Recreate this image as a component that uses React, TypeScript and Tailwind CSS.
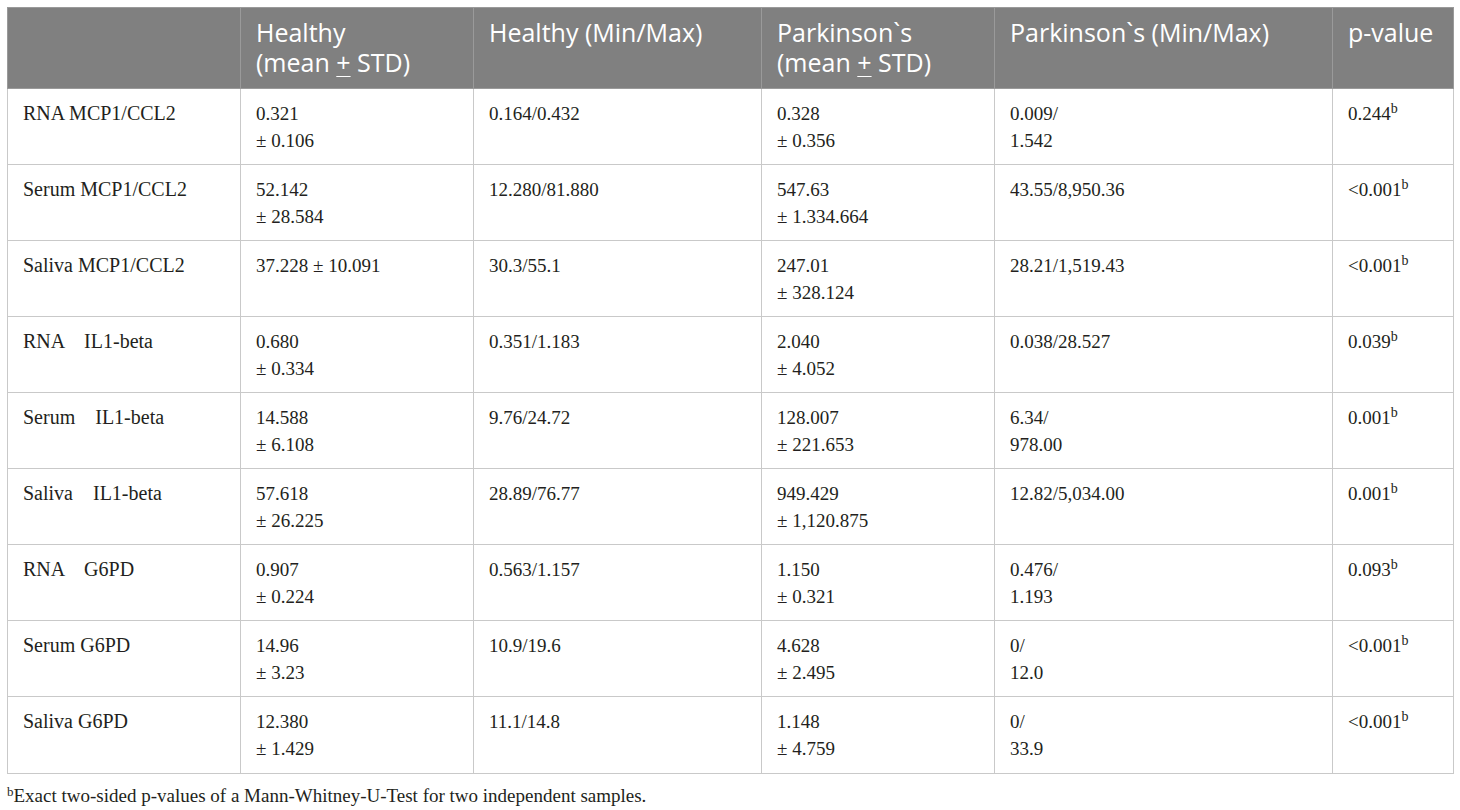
import React from "react";

const rows: [string, string[], string, string[], string[], string][] = [
  ["RNA MCP1/CCL2", ["0.321", "± 0.106"], "0.164/0.432", ["0.328", "± 0.356"], ["0.009/", "1.542"], "0.244"],
  ["Serum MCP1/CCL2", ["52.142", "± 28.584"], "12.280/81.880", ["547.63", "± 1.334.664"], ["43.55/8,950.36"], "<0.001"],
  ["Saliva MCP1/CCL2", ["37.228 ± 10.091"], "30.3/55.1", ["247.01", "± 328.124"], ["28.21/1,519.43"], "<0.001"],
  ["RNA    IL1-beta", ["0.680", "± 0.334"], "0.351/1.183", ["2.040", "± 4.052"], ["0.038/28.527"], "0.039"],
  ["Serum    IL1-beta", ["14.588", "± 6.108"], "9.76/24.72", ["128.007", "± 221.653"], ["6.34/", "978.00"], "0.001"],
  ["Saliva    IL1-beta", ["57.618", "± 26.225"], "28.89/76.77", ["949.429", "± 1,120.875"], ["12.82/5,034.00"], "0.001"],
  ["RNA    G6PD", ["0.907", "± 0.224"], "0.563/1.157", ["1.150", "± 0.321"], ["0.476/", "1.193"], "0.093"],
  ["Serum G6PD", ["14.96", "± 3.23"], "10.9/19.6", ["4.628", "± 2.495"], ["0/", "12.0"], "<0.001"],
  ["Saliva G6PD", ["12.380", "± 1.429"], "11.1/14.8", ["1.148", "± 4.759"], ["0/", "33.9"], "<0.001"],
];

const td = "border border-[#c9c9c9] align-top pl-[15px] pr-2 pt-[11px] leading-[27px]";
const th = "border border-[#9a9a9a] align-top text-left font-normal pl-[15px] pr-2 pt-[9px] leading-[30px]";

function Lines({ v }: { v: string[] }) {
  return (
    <>
      {v.map((s, i) => (
        <div key={i}>{s}</div>
      ))}
    </>
  );
}

export default function App() {
  return (
    <div className="w-[1460px] h-[810px] bg-white pt-[7px] pl-[7px]">
      <table className="border-collapse w-[1446px] table-fixed text-[#231f20] text-[19px] [font-family:'Liberation_Serif',serif]">
        <colgroup>
          <col className="w-[233px]" />
          <col className="w-[233px]" />
          <col className="w-[288px]" />
          <col className="w-[233px]" />
          <col className="w-[338px]" />
          <col className="w-[121px]" />
        </colgroup>
        <thead>
          <tr className="h-[81px] bg-[#808080] text-white text-[25px] [font-family:'Open_Sans',sans-serif]">
            <th className={th}></th>
            <th className={th}>
              <div>Healthy</div>
              <div>
                (mean <span className="underline underline-offset-[4px] decoration-1">+</span> STD)
              </div>
            </th>
            <th className={th}>Healthy (Min/Max)</th>
            <th className={th}>
              <div>Parkinson`s</div>
              <div>
                (mean <span className="underline underline-offset-[4px] decoration-1">+</span> STD)
              </div>
            </th>
            <th className={th}>Parkinson`s (Min/Max)</th>
            <th className={th}>p-value</th>
          </tr>
        </thead>
        <tbody>
          {rows.map((r, i) => (
            <tr key={i} className={i === rows.length - 1 ? "h-[77px]" : "h-[76px]"}>
              <td className={td + " whitespace-pre text-[20px]"}>{r[0]}</td>
              <td className={td}>
                <Lines v={r[1]} />
              </td>
              <td className={td}>{r[2]}</td>
              <td className={td}>
                <Lines v={r[3]} />
              </td>
              <td className={td}>
                <Lines v={r[4]} />
              </td>
              <td className={td}>
                {r[5]}
                <sup className="text-[14px]">b</sup>
              </td>
            </tr>
          ))}
        </tbody>
      </table>
      <div className="mt-[9px] text-[19px] text-[#231f20] leading-[26px] [font-family:'Liberation_Serif',serif]">
        <sup className="text-[13px]">b</sup>Exact two-sided p-values of a Mann-Whitney-U-Test for two independent samples.
      </div>
    </div>
  );
}
